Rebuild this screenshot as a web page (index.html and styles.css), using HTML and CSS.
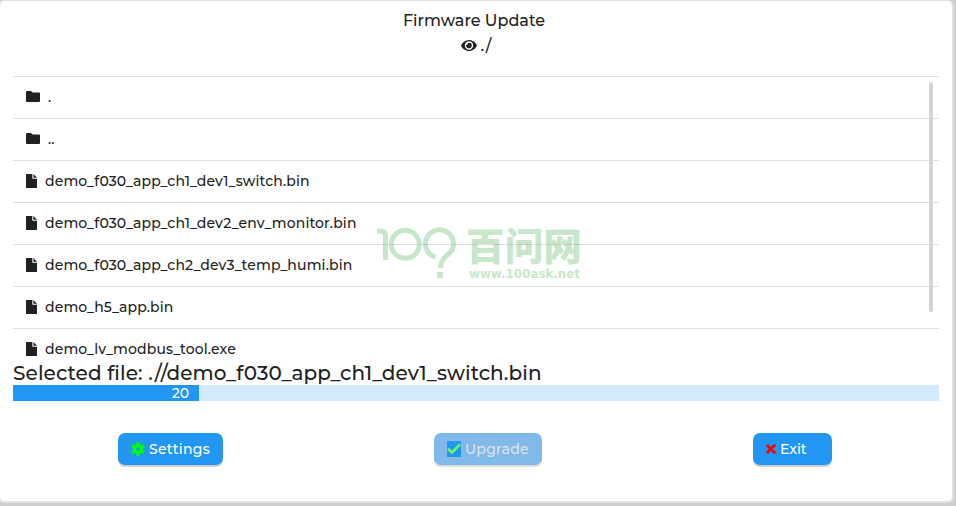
FILE: index.html
```html
<!DOCTYPE html>
<html lang="en">
<head>
<meta charset="utf-8">
<title>Firmware Update</title>
<link rel="stylesheet" href="styles.css">
</head>
<body>
<svg class="defs" width="0" height="0">
  <symbol id="folder" viewBox="0 0 14 11"><path d="M1 0H5l1.600 1.500h6.400A1 1 0 0 1 14 2.500v7.500a1 1 0 0 1-1 1H1A1 1 0 0 1 0 10V1A1 1 0 0 1 1 0z"/></symbol>
  <symbol id="file" viewBox="0 0 11 14"><path d="M6.300 4.200V0H.6Q0 0 0 .6v12.800q0 .6.600.6h9.800q.6 0 .6-.6V4.800H6.900q-.6 0-.6-.6zM11 3.700H7.400V0z"/></symbol>
</svg>
<main class="panel">
  <h1 class="title">Firmware Update</h1>
  <div class="path">
    <svg class="eye" viewBox="0 0 16 11"><path fill-rule="evenodd" d="M8 0C4.400 0 1.500 2.300 0 5.500 1.500 8.700 4.400 11 8 11s6.500-2.300 8-5.500C14.500 2.300 11.600 0 8 0zm0 1.300a4.200 4.200 0 1 1 0 8.400 4.200 4.200 0 0 1 0-8.400zm0 1.400c-.4 0-.7.1-1 .2a1.400 1.400 0 0 1-1.700 1.800A2.800 2.800 0 1 0 8 2.700z"/></svg>
    <span>./</span>
  </div>
  <section class="files">
    <div class="row"><svg class="folder"><use href="#folder"/></svg><span>.</span></div>
    <div class="row"><svg class="folder"><use href="#folder"/></svg><span>..</span></div>
    <div class="row"><svg class="file"><use href="#file"/></svg><span>demo_f030_app_ch1_dev1_switch.bin</span></div>
    <div class="row"><svg class="file"><use href="#file"/></svg><span>demo_f030_app_ch1_dev2_env_monitor.bin</span></div>
    <div class="row"><svg class="file"><use href="#file"/></svg><span>demo_f030_app_ch2_dev3_temp_humi.bin</span></div>
    <div class="row"><svg class="file"><use href="#file"/></svg><span>demo_h5_app.bin</span></div>
    <div class="row"><svg class="file"><use href="#file"/></svg><span>demo_lv_modbus_tool.exe</span></div>
    <div class="scrollbar"></div>
  </section>
  <p class="selected">Selected file: .//demo_f030_app_ch1_dev1_switch.bin</p>
  <div class="bar"><div class="fill" style="width:186px">20</div></div>
  <div class="actions">
    <button class="btn settings"><svg viewBox="0 0 14 14" class="gear"><circle cx="7" cy="7" r="3.600" fill="none" stroke="#0f0" stroke-width="3.200"/><path stroke="#0f0" stroke-width="3.600" d="M7 .2v3.200M7 10.600v3.200M1.100 3.600l2.800 1.600M10.100 8.800l2.800 1.600M1.100 10.400l2.800-1.600M10.100 5.200l2.800-1.600"/></svg><span>Settings</span></button>
    <button class="btn upgrade" disabled><svg viewBox="0 0 14 16" class="check"><path fill="none" stroke="#6cf56c" stroke-width="2.800" d="M1 7.700l3.900 3.900L13 3.600"/></svg><span>Upgrade</span></button>
    <button class="btn exit"><svg viewBox="0 0 10 10" class="cross"><path stroke="#f00" stroke-width="2.900" stroke-linecap="round" d="M1.700 1.700l6.600 6.600M8.300 1.700L1.700 8.300"/></svg><span>Exit</span></button>
  </div>
  <svg class="watermark" viewBox="376 226 206 54">
    <g fill="none" stroke-width="5">
      <path d="M377 231h4q4.500 0 4.500 5v24"/>
      <circle cx="405.300" cy="244.300" r="14"/>
      <path d="M435.500 257.300A14 14 0 1 1 452.500 249C450 255 440.500 257 440.500 268"/>
    </g>
    <path stroke="none" d="M437 272h6v6h-6z"/>
    <text class="brand" x="466" y="259.500" textLength="116" lengthAdjust="spacingAndGlyphs">百问网</text>
    <text class="site" x="469" y="278" textLength="111" lengthAdjust="spacingAndGlyphs">www.100ask.net</text>
  </svg>
</main>
</body>
</html>
```
FILE: styles.css
```css
* { box-sizing: border-box; }
body {
  margin: 0;
  height: 506px;
  overflow: hidden;
  background: #cdcdcd;
  color: #212121;
  font: 500 14px/16px Montserrat, Inter, "Noto Sans CJK SC", sans-serif;
}
.defs { display: block; }
.panel {
  position: relative;
  width: 956px;
  height: 503px;
  margin-left: -2px;
  padding: 0 13px;
  border: 2px solid #e0e0e0;
  border-top-width: 1px;
  border-radius: 6px;
  background: #fff;
}
.title {
  margin: 0;
  padding: 10px 4px 0 0;
  font-size: 16px;
  font-weight: 500;
  line-height: 19px;
  text-align: center;
}
.path {
  display: flex;
  justify-content: center;
  align-items: center;
  gap: 4px;
  height: 18px;
  margin-top: 7px;
  font-size: 16px;
}
.eye { width: 16px; height: 11px; margin-bottom: 2px; fill: #212121; }
.files {
  position: relative;
  height: 286px;
  margin-top: 21px;
  overflow: hidden;
}
.row {
  display: flex;
  align-items: center;
  gap: 8px;
  height: 42px;
  padding: 0 13px 2px;
  border-top: 1px solid #e0e0e0;
  letter-spacing: .14px;
}
.row svg { fill: #212121; }
.folder { width: 14px; height: 11px; }
.file { width: 11px; height: 14px; }
.scrollbar {
  position: absolute;
  top: 6px;
  right: 6px;
  width: 4px;
  height: 230px;
  border-radius: 2px;
  background: #d3d3d3;
}
.selected {
  margin: 0;
  height: 23px;
  font-size: 20px;
  line-height: 22px;
  font-weight: 500;
  letter-spacing: .11px;
  white-space: nowrap;
}
.bar { height: 16px; background: #d3e9fc; }
.fill {
  height: 16px;
  padding-right: 10px;
  background: #2196f3;
  color: #fff;
  text-align: right;
}
.actions {
  display: flex;
  padding: 32px 107px 0 105px;
  justify-content: space-between;
}
.btn {
  display: flex;
  align-items: center;
  gap: 4px;
  height: 32px;
  padding: 0 13px;
  border: 0;
  border-radius: 7px;
  background: #2196f3;
  box-shadow: 0 2px 0 #d0cfcd;
  color: #fff;
  font: inherit;
  letter-spacing: .27px;
}
.settings { width: 105px; }
.upgrade { width: 108px; background: #81b9e9; color: #dbe3ea; box-shadow: 0 2px 0 #dededd; }
.exit { width: 79px; letter-spacing: 0; }
.gear { width: 14px; height: 14px; }
.check { width: 14px; height: 16px; background: #2196f3; }
.cross { width: 10px; height: 10px; }
.watermark {
  position: absolute;
  left: 376px;
  top: 225px;
  width: 206px;
  height: 54px;
  overflow: visible;
  fill: #4caf50;
  stroke: #4caf50;
  opacity: .3;
}
.watermark text { stroke: none; }
.brand { font: 900 38px "Noto Sans CJK SC", sans-serif; }
.site { font: bold 12px "DejaVu Sans", sans-serif; }
```
